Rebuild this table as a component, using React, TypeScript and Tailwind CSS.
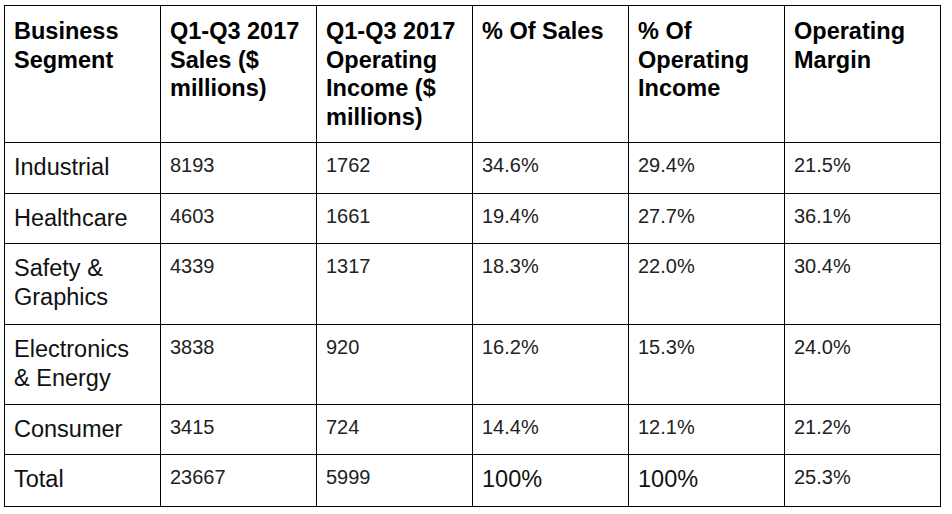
const headers = [
  'Business Segment',
  'Q1-Q3 2017 Sales ($ millions)',
  'Q1-Q3 2017 Operating Income ($ millions)',
  '% Of Sales',
  '% Of Operating Income',
  'Operating Margin',
];

type Row = {
  segment: string;
  values: string[];
  height: string;
};

const rows: Row[] = [
  { segment: 'Industrial', values: ['8193', '1762', '34.6%', '29.4%', '21.5%'], height: 'h-[51px]' },
  { segment: 'Healthcare', values: ['4603', '1661', '19.4%', '27.7%', '36.1%'], height: 'h-[50px]' },
  { segment: 'Safety & Graphics', values: ['4339', '1317', '18.3%', '22.0%', '30.4%'], height: 'h-[81px]' },
  { segment: 'Electronics & Energy', values: ['3838', '920', '16.2%', '15.3%', '24.0%'], height: 'h-[80px]' },
  { segment: 'Consumer', values: ['3415', '724', '14.4%', '12.1%', '21.2%'], height: 'h-[50px]' },
  { segment: 'Total', values: ['23667', '5999', '100%', '100%', '25.3%'], height: 'h-[52px]' },
];

export default function App() {
  return (
    <div className="h-[514px] w-[952px] bg-white pl-[4px] pt-[5px] font-['Liberation_Sans',Arial,sans-serif]">
      <table className="w-[937px] table-fixed border-collapse">
        <colgroup>
          {headers.map((h) => (
            <col key={h} className="w-[156px]" />
          ))}
        </colgroup>
        <thead>
          <tr className="h-[137px]">
            {headers.map((h) => (
              <th
                key={h}
                className="border border-black pl-[9px] pr-[13px] pt-[11px] text-left align-top text-[23.5px] font-bold leading-[28.7px] text-black"
              >
                {h}
              </th>
            ))}
          </tr>
        </thead>
        <tbody>
          {rows.map((row) => (
            <tr key={row.segment} className={row.height}>
              <td className="border border-black pl-[9px] pr-[13px] pt-[10px] align-top text-[23.5px] leading-[29px] text-[#111]">
                {row.segment}
              </td>
              {row.values.map((v, i) => {
                // the two 100% cells in the total row are set larger
                const big = v === '100%';
                return (
                  <td
                    key={i}
                    className={
                      big
                        ? 'border border-black pl-[9px] pr-[13px] pt-[10px] align-top text-[23.5px] leading-[29px] text-[#111]'
                        : 'border border-black pl-[9px] pr-[13px] pt-[11px] align-top text-[20px] leading-[23px] text-[#222]'
                    }
                  >
                    {v}
                  </td>
                );
              })}
            </tr>
          ))}
        </tbody>
      </table>
    </div>
  );
}
